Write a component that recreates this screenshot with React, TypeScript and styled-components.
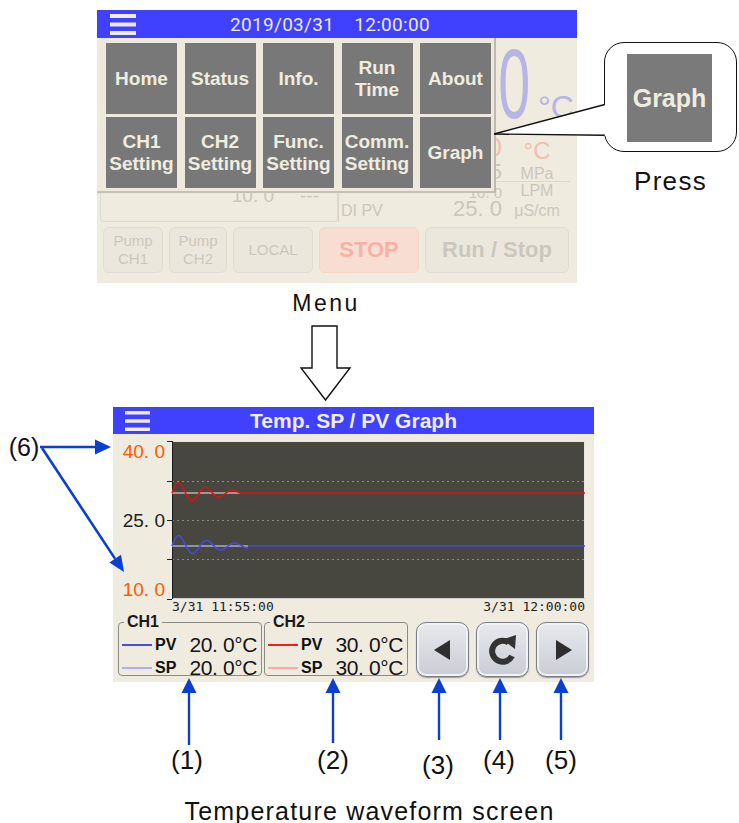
import React from 'react';
import styled, { createGlobalStyle } from 'styled-components';

const GlobalStyle = createGlobalStyle`
  html, body {
    margin: 0;
    padding: 0;
    background: #ffffff;
  }
  body {
    font-family: "Liberation Sans", Arial, sans-serif;
    color: #111;
  }
`;

const BLUE = '#4040ff';
const NOTE = '#0b3fd0';
const FADE = '#cbc7bc';

const menuItems = [
  ['Home'], ['Status'], ['Info.'], ['Run', 'Time'], ['About'],
  ['CH1', 'Setting'], ['CH2', 'Setting'], ['Func.', 'Setting'], ['Comm.', 'Setting'], ['Graph'],
];

// damped oscillation drawn at the start of each trace
function wave(cy: number, len: number, amp: number, period: number, tau: number) {
  const pts: string[] = [];
  for (let x = 0; x <= len; x += 1) {
    const y = cy - amp * Math.exp(-x / tau) * Math.sin((2 * Math.PI * x) / period);
    pts.push(`${x},${y.toFixed(1)}`);
  }
  return 'M' + pts.join(' L');
}

const Hamburger = ({ w, h, bar }: { w: number; h: number; bar: number }) => (
  <svg width={w} height={h} viewBox={`0 0 ${w} ${h}`}>
    <rect x="0" y="0" width={w} height={bar} fill="#ecebf2" />
    <rect x="0" y={(h - bar) / 2} width={w} height={bar} fill="#ecebf2" />
    <rect x="0" y={h - bar} width={w} height={bar} fill="#ecebf2" />
  </svg>
);

const App = () => {
  const chartW = 413;
  const chartH = 158;
  const grid = [40, 79, 118];
  const ticks = [0, 40, 79, 118, 158];

  return (
    <Root>
      <GlobalStyle />

      <TopRow>
        <Screen $width={480} $height={273}>
          <TitleBar $h={28} $cols="46px 1fr 60px">
            <HamburgerSlot $pad={13}>
              <Hamburger w={26} h={21} bar={4} />
            </HamburgerSlot>
            <DateText>2019/03/31&nbsp;&nbsp;&nbsp;&nbsp;12:00:00</DateText>
            <span />
          </TitleBar>

          <HomeReadings>
            <LeftCol>
              <InfoBox>
                <span>10. 0</span>
                <span>---</span>
              </InfoBox>
            </LeftCol>
            <RightCol>
              <BigReading>
                <BigValue>20. 0</BigValue>
                <BigUnit>°C</BigUnit>
              </BigReading>
              <Reading $h={36}>
                <span />
                <RValue $size={26} $color="#f2bfae">30. 0</RValue>
                <RUnit $color="#f2bfae" $size={24}>°C</RUnit>
              </Reading>
              <Reading $h={20} $line>
                <span />
                <RValue $size={22}>0. 5</RValue>
                <RUnit>MPa</RUnit>
              </Reading>
              <Reading $h={15}>
                <span />
                <RValue $size={15}>10. 0</RValue>
                <RUnit>LPM</RUnit>
              </Reading>
              <Reading $h={22}>
                <RLabel>DI PV</RLabel>
                <RValue $size={22}>25. 0</RValue>
                <RUnit>μS/cm</RUnit>
              </Reading>
            </RightCol>
          </HomeReadings>

          <HomeButtons>
            <HomeButton $w={60}>
              <span>Pump</span>
              <span>CH1</span>
            </HomeButton>
            <HomeButton $w={58}>
              <span>Pump</span>
              <span>CH2</span>
            </HomeButton>
            <HomeButton $w={80}>LOCAL</HomeButton>
            <HomeButton $w={100} $tone="stop">STOP</HomeButton>
            <HomeButton $w={144} $tone="run">Run / Stop</HomeButton>
          </HomeButtons>

          <MenuPanel>
            {menuItems.map((lines) => (
              <MenuButton key={lines.join(' ')}>
                {lines.map((l) => (
                  <span key={l}>{l}</span>
                ))}
              </MenuButton>
            ))}
          </MenuPanel>
        </Screen>

        <CalloutCol>
          <Callout>
            <GraphKey>Graph</GraphKey>
          </Callout>
          <Caption $size={26} $spacing={1.3}>Press</Caption>
        </CalloutCol>
      </TopRow>

      <Connector>
        <Caption $size={23} $spacing={2.5}>Menu</Caption>
        <DownArrow width="52" height="78" viewBox="-1 -1 52 78">
          <path
            d="M11,1 L36,1 L36,43 L49,43 L24.5,75 L0,43 L11,43 Z"
            fill="#fff"
            stroke="#111"
            strokeWidth="1.4"
            strokeLinejoin="miter"
          />
        </DownArrow>
      </Connector>

      <GraphScreen>
        <Screen $width={481} $height={275}>
          <TitleBar $h={27} $cols="37px 1fr 37px">
            <HamburgerSlot $pad={12}>
              <Hamburger w={25} h={20} bar={3.5} />
            </HamburgerSlot>
            <GraphTitle>Temp. SP / PV Graph</GraphTitle>
            <span />
          </TitleBar>

          <ChartGrid>
            <YAxis>
              <YLabel $accent>40. 0</YLabel>
              <YLabel>25. 0</YLabel>
              <YLabel $accent>10. 0</YLabel>
            </YAxis>
            <ChartSvg width={chartW} height={chartH} viewBox={`0 0 ${chartW} ${chartH}`}>
              <rect x="0" y="0" width={chartW} height={chartH} fill="#48473f" />
              {grid.map((g) => (
                <line key={g} x1="0" x2={chartW} y1={g + 0.5} y2={g + 0.5} stroke="#8c8b82" strokeDasharray="2 3" />
              ))}
              <line x1="0" x2={chartW} y1="0.5" y2="0.5" stroke="#e6e6e6" />
              <line x1={chartW - 0.5} x2={chartW - 0.5} y1="0" y2={chartH} stroke="#e6e6e6" />
              <line x1="0" x2={chartW} y1={chartH - 0.5} y2={chartH - 0.5} stroke="#cfcfcf" />
              <line x1="0.5" x2="0.5" y1="0" y2={chartH} stroke="#1c1c1c" />
              {ticks.map((t) => (
                <line key={t} x1="-5" x2="0" y1={t + 0.5} y2={t + 0.5} stroke="#222" />
              ))}

              <line x1="0" x2="68" y1="52" y2="52" stroke="#d6a4a4" strokeWidth="1.6" />
              <line x1="68" x2={chartW} y1="52" y2="52" stroke="#d41414" strokeWidth="1.6" />
              <path d={wave(52, 68, 12, 27, 45)} fill="none" stroke="#d41414" strokeWidth="1.5" />

              <line x1="0" x2="76" y1="105" y2="105" stroke="#a6a6e6" strokeWidth="1.6" />
              <line x1="76" x2={chartW} y1="105" y2="105" stroke="#4848dc" strokeWidth="1.6" />
              <path d={wave(105, 76, 12, 28, 45)} fill="none" stroke="#4848dc" strokeWidth="1.5" />
            </ChartSvg>
            <TimeRow>
              <span>3/31 11:55:00</span>
              <span>3/31 12:00:00</span>
            </TimeRow>
          </ChartGrid>

          <BottomRow>
            <ChannelBox>
              <ChannelLegend>CH1</ChannelLegend>
              <ChannelRow>
                <Swatch $color="#4a4af0" />
                <RowName>PV</RowName>
                <RowValue>20. 0°C</RowValue>
              </ChannelRow>
              <ChannelRow>
                <Swatch $color="#b0b0f4" />
                <RowName>SP</RowName>
                <RowValue>20. 0°C</RowValue>
              </ChannelRow>
            </ChannelBox>
            <ChannelBox>
              <ChannelLegend>CH2</ChannelLegend>
              <ChannelRow>
                <Swatch $color="#ee2020" />
                <RowName>PV</RowName>
                <RowValue>30. 0°C</RowValue>
              </ChannelRow>
              <ChannelRow>
                <Swatch $color="#f6aaaa" />
                <RowName>SP</RowName>
                <RowValue>30. 0°C</RowValue>
              </ChannelRow>
            </ChannelBox>

            <NavButtons>
              <NavButton>
                <svg width="22" height="22" viewBox="0 0 22 22">
                  <polygon points="18,1 18,21 2,11" fill="#2e2e2e" />
                </svg>
              </NavButton>
              <NavButton>
                <svg width="32" height="34" viewBox="0 0 32 34">
                  <path d="M21.5 9.5 A10.5 10.5 0 1 0 25 23" fill="none" stroke="#333" strokeWidth="6" />
                  <polygon points="15.5,6.5 29,2 28,16" fill="#333" />
                </svg>
              </NavButton>
              <NavButton>
                <svg width="22" height="22" viewBox="0 0 22 22">
                  <polygon points="4,1 4,21 20,11" fill="#2e2e2e" />
                </svg>
              </NavButton>
            </NavButtons>
          </BottomRow>
        </Screen>
      </GraphScreen>

      <Caption $size={25} $spacing={1.2} $top={118} $lh={22}>Temperature waveform screen</Caption>

      <Notes width="739" height="823" viewBox="0 0 739 823">
        {/* callout pointer */}
        <polygon points="494,134 606,104 606,136" fill="#fff" />
        <line x1="494" y1="134" x2="604.8" y2="104.5" stroke="#111" strokeWidth="1.4" />
        <line x1="494" y1="134" x2="604.8" y2="135.3" stroke="#111" strokeWidth="1.4" />

        {/* (6) arrows */}
        <g stroke={NOTE} strokeWidth="2.6" fill={NOTE}>
          <line x1="40" y1="447" x2="97" y2="447" />
          <line x1="42" y1="448" x2="115" y2="558.6" />
        </g>
        <polygon points="111,447 95,439.5 95,454.5" fill={NOTE} />
        <polygon points="124,572 109.4,562.5 121,554.8" fill={NOTE} />

        {[
          { x: 189, b: 745 },
          { x: 333, b: 743 },
          { x: 439, b: 740 },
          { x: 500, b: 740 },
          { x: 561, b: 740 },
        ].map((a) => (
          <g key={a.x} fill={NOTE}>
            <line x1={a.x} x2={a.x} y1={a.b} y2="692" stroke={NOTE} strokeWidth="2.4" />
            <polygon points={`${a.x},678 ${a.x - 7.5},693 ${a.x + 7.5},693`} />
          </g>
        ))}
      </Notes>

      <NoteLabel $x={24} $y={447} $size={25}>(6)</NoteLabel>
      <NoteLabel $x={187} $y={760}>(1)</NoteLabel>
      <NoteLabel $x={333} $y={760}>(2)</NoteLabel>
      <NoteLabel $x={438} $y={765}>(3)</NoteLabel>
      <NoteLabel $x={499} $y={760}>(4)</NoteLabel>
      <NoteLabel $x={561} $y={760}>(5)</NoteLabel>
    </Root>
  );
};

const Root = styled.div`
  position: relative;
  width: 739px;
  height: 823px;
  overflow: hidden;
  background: #fff;
`;

const TopRow = styled.div`
  display: flex;
  align-items: flex-start;
  padding: 10px 0 0 97px;
`;

const Screen = styled.div<{ $width: number; $height: number }>`
  position: relative;
  flex-shrink: 0;
  width: ${(p) => p.$width}px;
  height: ${(p) => p.$height}px;
  background: #efebdf;
  display: flex;
  flex-direction: column;
  overflow: hidden;
`;

const TitleBar = styled.div<{ $h: number; $cols: string }>`
  flex-shrink: 0;
  height: ${(p) => p.$h}px;
  background: ${BLUE};
  display: grid;
  grid-template-columns: ${(p) => p.$cols};
  align-items: center;
  color: #ecebf2;
`;

const HamburgerSlot = styled.div<{ $pad: number }>`
  display: flex;
  align-items: center;
  padding-left: ${(p) => p.$pad}px;
`;

const DateText = styled.div`
  text-align: center;
  font-family: Roboto, "Liberation Sans", sans-serif;
  font-size: 19px;
  letter-spacing: 0.3px;
`;

const HomeReadings = styled.div`
  display: flex;
  height: 184px;
`;

const LeftCol = styled.div`
  width: 238px;
  padding-left: 3px;
  display: flex;
  flex-direction: column;
  justify-content: flex-end;
`;

const InfoBox = styled.div`
  height: 36px;
  box-sizing: border-box;
  border: 1px solid #dedacf;
  border-radius: 3px;
  display: flex;
  justify-content: flex-end;
  gap: 26px;
  padding: 0 18px 0 0;
  color: ${FADE};
  font-size: 19px;
  line-height: 18px;
`;

const RightCol = styled.div`
  flex: 1;
  min-width: 0;
  border-left: 1px solid #d9d5ca;
  display: flex;
  flex-direction: column;
  padding-right: 5px;
`;

const BigReading = styled.div`
  display: flex;
  justify-content: flex-end;
  align-items: baseline;
  height: 80px;
  padding-top: 6px;
  color: #b6b5e4;
  white-space: nowrap;
`;

const BigValue = styled.span`
  display: inline-block;
  flex-shrink: 0;
  font-size: 99px;
  line-height: 80px;
  transform: scaleX(0.58);
  transform-origin: right bottom;
`;

const BigUnit = styled.span`
  flex-shrink: 0;
  font-size: 32px;
  margin-left: 8px;
  width: 34px;
`;

const Reading = styled.div<{ $h: number; $line?: boolean }>`
  display: grid;
  grid-template-columns: 62px 1fr 66px;
  align-items: end;
  height: ${(p) => p.$h}px;
  margin-right: 2px;
  white-space: nowrap;
  border-bottom: 1px solid ${(p) => (p.$line ? '#dcd8cd' : 'transparent')};
  color: ${FADE};
`;

const RLabel = styled.span`
  font-size: 16px;
  padding-left: 2px;
  line-height: 18px;
`;

const RValue = styled.span<{ $size: number; $color?: string }>`
  text-align: right;
  font-size: ${(p) => p.$size}px;
  line-height: ${(p) => p.$size}px;
  color: ${(p) => p.$color || FADE};
  padding-right: 2px;
`;

const RUnit = styled.span<{ $color?: string; $size?: number }>`
  text-align: center;
  font-size: ${(p) => p.$size || 16}px;
  line-height: 18px;
  color: ${(p) => p.$color || FADE};
`;

const HomeButtons = styled.div`
  display: flex;
  gap: 6px;
  padding: 5px 0 0 6px;
`;

const HomeButton = styled.div<{ $w: number; $tone?: 'stop' | 'run' }>`
  width: ${(p) => p.$w}px;
  height: 46px;
  box-sizing: border-box;
  border: 1px solid ${(p) => (p.$tone === 'stop' ? '#f4d6cb' : '#e1ddd2')};
  border-radius: 6px;
  background: ${(p) => (p.$tone === 'stop' ? '#f8ddd3' : '#ebe7dc')};
  display: flex;
  flex-direction: column;
  align-items: center;
  justify-content: center;
  color: ${(p) => (p.$tone === 'stop' ? '#f4b4a5' : FADE)};
  font-size: ${(p) => (p.$tone ? 22 : 15)}px;
  font-weight: ${(p) => (p.$tone ? 700 : 400)};
  line-height: 18px;
`;

const MenuPanel = styled.div`
  position: absolute;
  top: 28px;
  left: 0;
  width: 399px;
  height: 155px;
  box-sizing: border-box;
  padding: 5px 5px 5px 9px;
  background: #ede9dd;
  border-right: 2px solid #bdb9ad;
  border-bottom: 2px solid #c4c0b4;
  display: grid;
  grid-template-columns: repeat(5, 71px);
  grid-template-rows: repeat(2, 71px);
  column-gap: 7.5px;
  row-gap: 3px;
`;

const MenuButton = styled.div`
  background: #787878;
  color: #efece0;
  display: flex;
  flex-direction: column;
  align-items: center;
  justify-content: center;
  font-weight: 700;
  font-size: 19px;
  line-height: 22px;
  text-align: center;
`;

const CalloutCol = styled.div`
  display: flex;
  flex-direction: column;
  align-items: center;
  margin: 32px 0 0 27px;
  width: 133px;
`;

const Callout = styled.div`
  width: 133px;
  height: 110px;
  box-sizing: border-box;
  border: 1.4px solid #111;
  border-radius: 20px;
  background: #fff;
  display: flex;
  align-items: center;
  justify-content: center;
  padding: 2px 2px 0 0;
`;

const GraphKey = styled.div`
  width: 85px;
  height: 88px;
  background: #7a7a7a;
  color: #efece0;
  display: flex;
  align-items: center;
  justify-content: center;
  font-weight: 700;
  font-size: 25px;
`;

const Caption = styled.div<{ $size: number; $spacing?: number; $top?: number; $lh?: number }>`
  font-size: ${(p) => p.$size}px;
  line-height: ${(p) => p.$lh ?? p.$size + 4}px;
  letter-spacing: ${(p) => p.$spacing || 0}px;
  margin-top: ${(p) => p.$top ?? 14}px;
  text-align: center;
  color: #111;
  white-space: nowrap;
`;

const Connector = styled.div`
  width: 100px;
  margin-left: 276px;
  margin-top: -7px;
  display: flex;
  flex-direction: column;
  align-items: center;
`;

const DownArrow = styled.svg`
  display: block;
  margin-top: 7px;
`;

const GraphScreen = styled.div`
  margin: 5px 0 0 113px;
`;

const GraphTitle = styled.div`
  text-align: center;
  font-weight: 700;
  font-size: 21px;
  color: #eeeef4;
`;

const ChartGrid = styled.div`
  display: grid;
  grid-template-columns: 59px 413px;
  grid-template-rows: 158px auto;
  margin-top: 7px;
`;

const YAxis = styled.div`
  display: flex;
  flex-direction: column;
  justify-content: space-between;
  align-items: flex-end;
  padding: 1px 7px 0 0;
  margin-bottom: -1px;
`;

const YLabel = styled.span<{ $accent?: boolean }>`
  font-size: 19px;
  line-height: 20px;
  color: ${(p) => (p.$accent ? '#ff5a00' : '#222')};
`;

const ChartSvg = styled.svg`
  display: block;
  overflow: visible;
`;

const TimeRow = styled.div`
  grid-column: 2;
  display: flex;
  justify-content: space-between;
  font-family: "DejaVu Sans Mono", monospace;
  font-size: 13px;
  line-height: 14px;
  color: #222;
  padding-top: 1px;
`;

const BottomRow = styled.div`
  display: flex;
  align-items: flex-end;
  padding-left: 5px;
  margin-top: 0;
  gap: 2px;
`;

const ChannelBox = styled.fieldset`
  width: 144px;
  height: 62px;
  box-sizing: border-box;
  margin: 0;
  padding: 3px 3px 0 3px;
  border: 1px solid #8b8a84;
  border-radius: 4px;
  min-inline-size: 0;
`;

const ChannelLegend = styled.legend`
  margin-left: 2px;
  padding: 0 3px;
  font-weight: 700;
  font-size: 16px;
  line-height: 16px;
  color: #1a1a1a;
`;

const ChannelRow = styled.div`
  display: grid;
  grid-template-columns: 33px 24px 1fr;
  align-items: center;
  height: 23px;
`;

const Swatch = styled.span<{ $color: string }>`
  display: block;
  width: 30px;
  height: 2px;
  background: ${(p) => p.$color};
`;

const RowName = styled.span`
  font-weight: 700;
  font-size: 16px;
`;

const RowValue = styled.span`
  text-align: right;
  font-size: 21px;
  letter-spacing: -0.4px;
  color: #151515;
  padding-right: 1px;
`;

const NavButtons = styled.div`
  display: flex;
  gap: 7px;
  margin: 0 0 -1px 6px;
`;

const NavButton = styled.div`
  width: 53px;
  height: 55px;
  box-sizing: border-box;
  border: 1.5px solid #7a7d85;
  border-radius: 10px;
  background: linear-gradient(#e8eaee, #c9ccd3);
  box-shadow: inset 0 0 0 2px #f1f2f5, 0 1px 1px #9a9da4;
  display: flex;
  align-items: center;
  justify-content: center;
`;

const Notes = styled.svg`
  position: absolute;
  top: 0;
  left: 0;
  pointer-events: none;
`;

const NoteLabel = styled.span<{ $x: number; $y: number; $size?: number }>`
  position: absolute;
  left: ${(p) => p.$x}px;
  top: ${(p) => p.$y}px;
  transform: translate(-50%, -50%);
  font-size: ${(p) => p.$size || 26}px;
  line-height: 1;
  color: #111;
`;

export default App;
